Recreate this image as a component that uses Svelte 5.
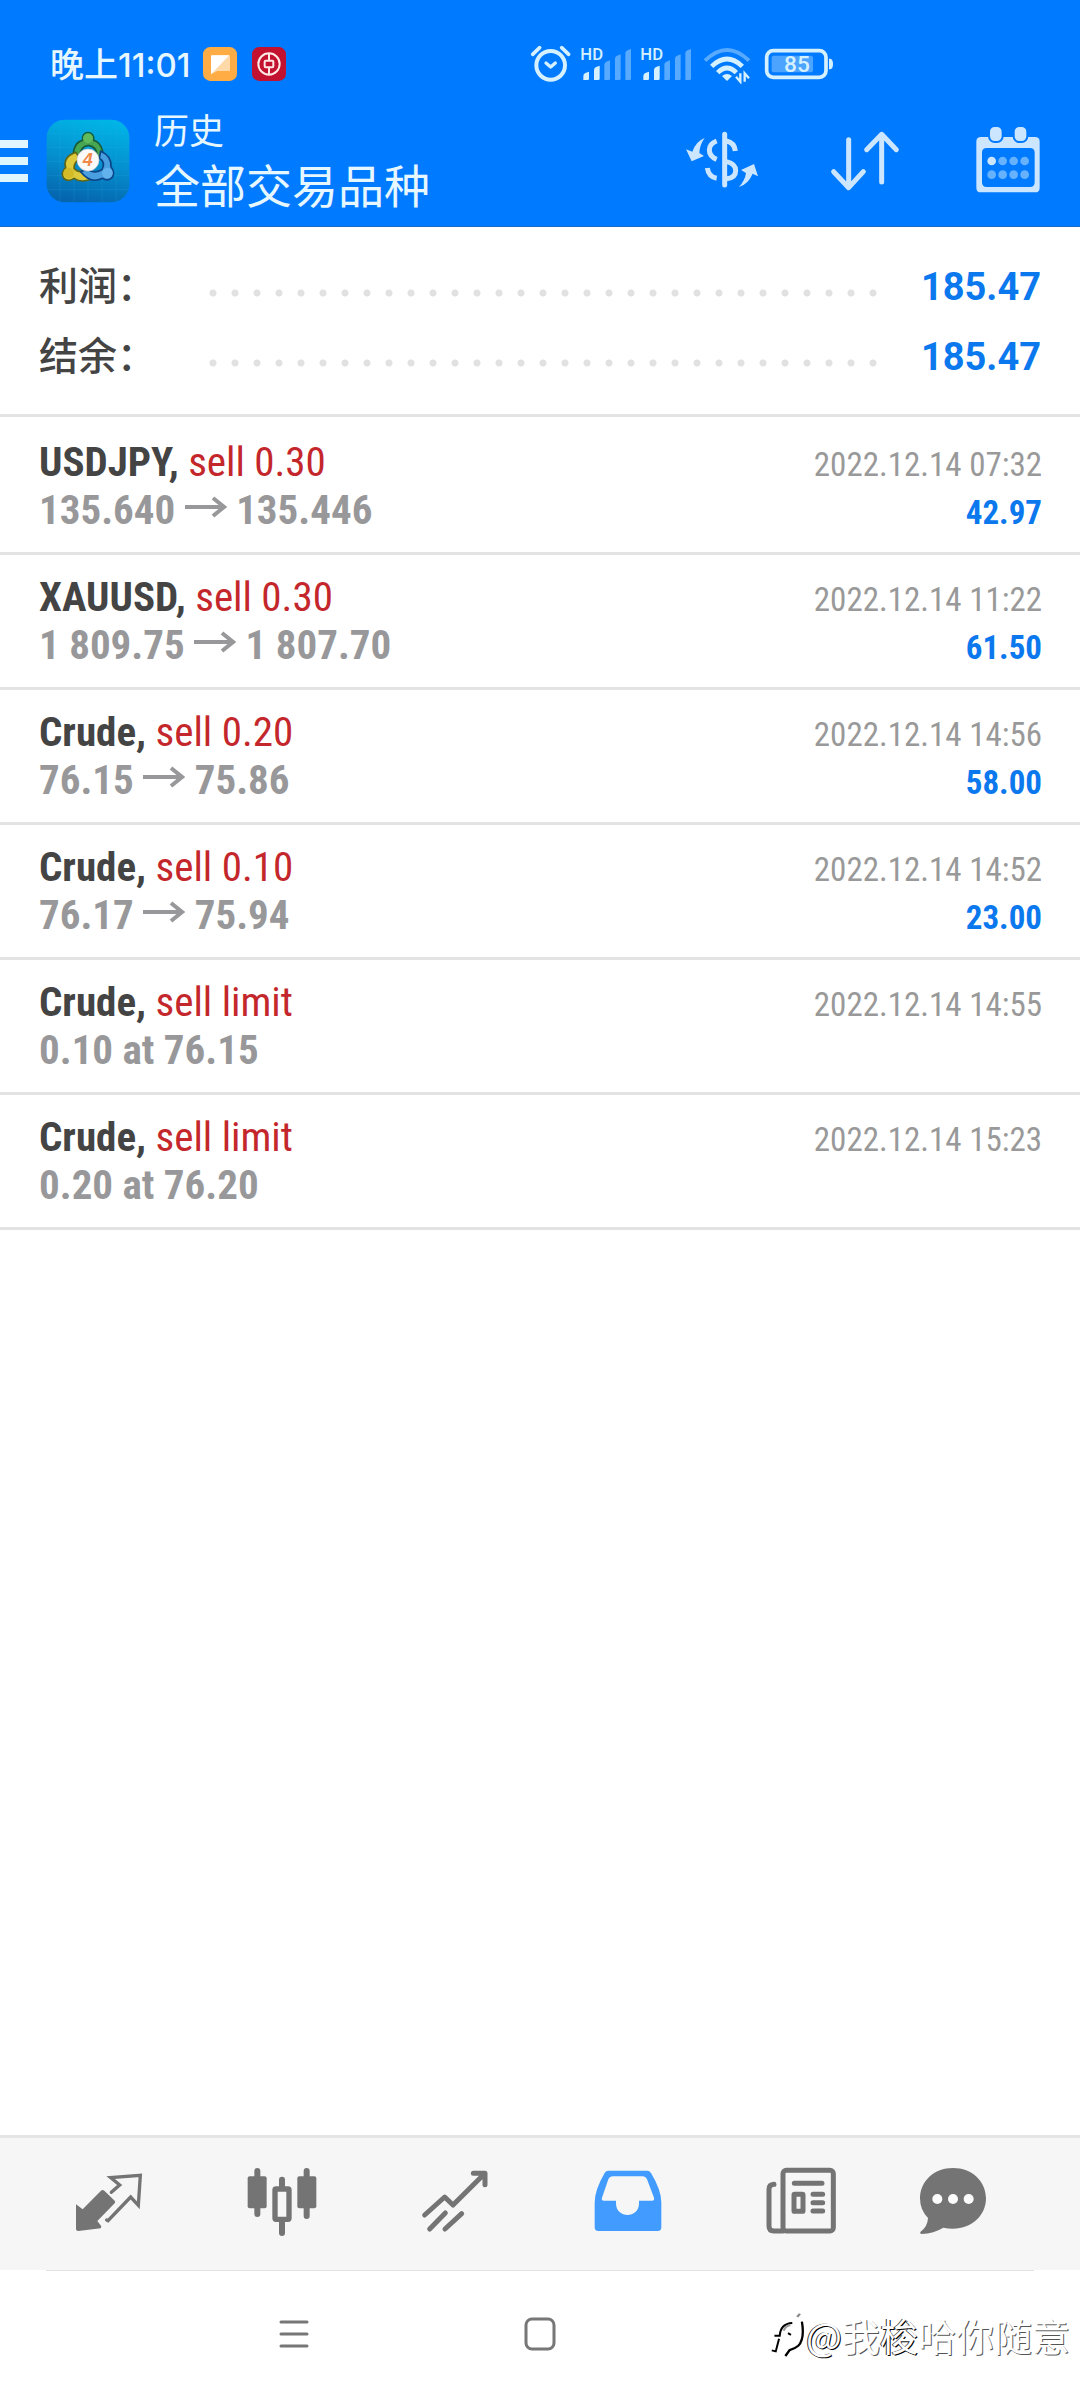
<script>
  const totals = [
    { label: '利润：', value: '185.47' },
    { label: '结余：', value: '185.47' },
  ];

  const deals = [
    { symbol: 'USDJPY,', side: 'sell 0.30', from: '135.640', to: '135.446', time: '2022.12.14 07:32', profit: '42.97' },
    { symbol: 'XAUUSD,', side: 'sell 0.30', from: '1 809.75', to: '1 807.70', time: '2022.12.14 11:22', profit: '61.50' },
    { symbol: 'Crude,', side: 'sell 0.20', from: '76.15', to: '75.86', time: '2022.12.14 14:56', profit: '58.00' },
    { symbol: 'Crude,', side: 'sell 0.10', from: '76.17', to: '75.94', time: '2022.12.14 14:52', profit: '23.00' },
    { symbol: 'Crude,', side: 'sell limit', detail: '0.10 at 76.15', time: '2022.12.14 14:55' },
    { symbol: 'Crude,', side: 'sell limit', detail: '0.20 at 76.20', time: '2022.12.14 15:23' },
  ];

  const bars = [
    { x: 250, top: 126 },
    { x: 282, top: 108 },
    { x: 313, top: 92 },
    { x: 345, top: 74 },
    { x: 376, top: 58 },
  ];
  const dotXs = [996, 1029, 1062, 1095];
</script>

<div class="screen">
  <header class="top">
    <div class="status">
      <span class="clock">晚上<span class="digits">11:01</span></span>
      <svg class="badge" viewBox="609 50 102 102" aria-hidden="true">
        <rect x="609" y="50" width="102" height="102" rx="22" fill="#ffac45" />
        <path d="M636 75H686Q690 75 690 79V118Q690 122 686 122H652L633 132V79Q633 75 636 75Z" fill="#ffd9a8" />
        <path d="M636 75H688L633 132V79Q633 75 636 75Z" fill="#fff" />
      </svg>
      <svg class="badge" viewBox="759 50 102 102" aria-hidden="true">
        <rect x="759" y="50" width="102" height="102" rx="22" fill="#c3122f" />
        <g fill="none" stroke="#ffe9e4" stroke-width="6">
          <circle cx="810" cy="101" r="32" />
          <rect x="797" y="91" width="26" height="20" rx="3" />
          <path d="M810 69V91M810 111V133" />
        </g>
      </svg>
      <svg class="signals" viewBox="90 42 912 120" aria-hidden="true">
        <g fill="none" stroke="#d5f1ff" stroke-width="12" stroke-linecap="round" stroke-linejoin="round">
          <circle cx="152" cy="106" r="43" />
          <path d="M98 73L119 53M206 73L185 53" stroke-width="11" />
          <path d="M138 99L152 111L166 99" stroke-width="10" />
        </g>
        {#each [0, 180] as shift}
          <g transform="translate({shift} 0)">
            <text class="svg-text" x="241" y="91" font-size="50">HD</text>
            {#each bars as bar, i}
              <path
                d="M{bar.x} 150V{bar.top + 12}Q{bar.x} {bar.top + 6} {bar.x + 6} {bar.top + 3}L{bar.x + 17} {bar.top - 1}V146Q{bar.x + 17} 150 {bar.x + 13} 150Z"
                fill={i < 2 ? '#d5f1ff' : '#58aaff'}
              />
            {/each}
          </g>
        {/each}
        <g fill="none" stroke-width="12">
          <path d="M615 92Q681 28 747 92" stroke="#58aaff" />
          <path d="M635 109Q681 65 727 109" stroke="#d5f1ff" stroke-width="14" />
          <path d="M653 128Q681 100 709 128" stroke="#d5f1ff" stroke-width="14" />
        </g>
        <path d="M666 138Q681 126 696 138L681 153Z" fill="#d5f1ff" />
        <path d="M721 130V155L708 140M734 155V130L747 145" fill="none" stroke="#d5f1ff" stroke-width="7" />
        <rect x="800" y="62" width="178" height="80" rx="20" fill="none" stroke="#d5f1ff" stroke-width="11" />
        <rect x="815" y="77" width="124" height="50" rx="6" fill="#4da4ff" />
        <path d="M987 86H991Q999 88 999 102T991 118H987Z" fill="#d5f1ff" />
        <text class="svg-text" x="891" y="127" font-size="68" text-anchor="middle">85</text>
      </svg>
    </div>

    <div class="bar">
      <button class="menu" aria-label="菜单">
        <svg viewBox="0 0 28 42" width="28" height="42"><path d="M0 0H28V8H0ZM0 17H28V25H0ZM0 34H28V42H0Z" fill="#e0f6ff" /></svg>
      </button>
      <svg class="logo" viewBox="138 268 252 252" aria-hidden="true">
        <defs>
          <linearGradient id="tile" x1="0.6" y1="0" x2="0.4" y2="1">
            <stop offset="0" stop-color="#00b4e6" />
            <stop offset="0.5" stop-color="#0590cf" />
            <stop offset="1" stop-color="#0565ad" />
          </linearGradient>
        </defs>
        <rect x="140" y="270" width="248" height="248" rx="54" fill="url(#tile)" />
        <path d="M180 270V518M222 270V518M264 270V518M306 270V518M348 270V518M140 312H388M140 354H388M140 396H388M140 438H388M140 480H388" stroke="#35b5e6" stroke-opacity="0.25" stroke-width="2" />
        <g stroke-linejoin="round">
          <path d="M220 392Q216 340 248 332Q246 310 264 309Q283 310 281 332Q311 342 310 390L291 378Q292 352 265 347Q240 350 239 382Z" fill="#48a551" stroke="#155d3a" stroke-width="5" />
          <path d="M228 368Q188 382 197 414Q180 432 192 446Q204 458 222 446Q246 462 280 446L256 424Q232 430 222 416Q222 396 240 388Z" fill="#ddc93c" stroke="#5f6616" stroke-width="5" />
          <path d="M302 364Q336 380 333 412Q347 428 336 444Q324 456 308 446Q272 464 242 426L262 418Q280 434 306 420Q318 398 298 386Z" fill="#4a9fe0" stroke="#0b4587" stroke-width="5" />
        </g>
        <circle cx="264" cy="326" r="15" fill="#5fbb5c" />
        <circle cx="206" cy="430" r="16" fill="#d3bb28" />
        <circle cx="322" cy="430" r="16" fill="#62b2ee" />
        <circle cx="264" cy="391" r="33" fill="#fafafa" stroke="#c9c9c9" stroke-width="2" />
        <text class="four" x="263" y="410" font-size="54" text-anchor="middle">4</text>
      </svg>
      <div class="titles">
        <h1>历史</h1>
        <p>全部交易品种</p>
      </div>
      <div class="actions">
        <button aria-label="品种">
          <svg viewBox="78 44 216 216">
            <g fill="none" stroke="#cce6ff" stroke-width="15">
              <path d="M194 72V224" stroke-linecap="round" />
              <path d="M170 92Q148 100 148 119T170 147M142 173Q146 200 170 204" />
              <path d="M200 92Q224 98 226 122" />
              <path d="M200 154Q227 160 227 181T200 205" />
            </g>
            <path d="M134 83Q119 103 118 128L132 137L95 153L78 117L97 124Q108 93 134 83ZM237 230Q255 210 258 188L243 179L282 161L294 198L278 190Q264 222 237 230Z" fill="#cce6ff" />
          </svg>
        </button>
        <button aria-label="排序">
          <svg viewBox="507 44 216 216">
            <path d="M566 88V230M521 184L566 232L610 184M665 215V75M620 118L665 72L709 118" fill="none" stroke="#cce6ff" stroke-width="15" stroke-linecap="round" stroke-linejoin="round" />
          </svg>
        </button>
        <button aria-label="日期">
          <svg viewBox="937 44 216 216">
            <path fill-rule="evenodd" d="M964 80H1126Q1140 80 1140 94V232Q1140 246 1126 246H964Q950 246 950 232V94Q950 80 964 80ZM981 113Q967 113 967 127V216Q967 230 981 230H1111Q1125 230 1125 216V127Q1125 113 1111 113Z" fill="#cce6ff" />
            <rect x="988" y="47" width="41" height="48" rx="17" fill="#cce6ff" stroke="#007aff" stroke-width="6" />
            <rect x="1062" y="47" width="41" height="48" rx="17" fill="#cce6ff" stroke="#007aff" stroke-width="6" />
            {#each dotXs as x, i}
              <circle cx={x} cy="152" r="13" fill={i === 0 ? '#cce6ff' : '#66b2ff'} />
              <circle cx={x} cy="193" r="13" fill="#66b2ff" />
            {/each}
          </svg>
        </button>
      </div>
    </div>
  </header>

  <main>
    <dl class="totals">
      {#each totals as t}
        <div class="total">
          <dt>{t.label}</dt>
          <span class="leader"></span>
          <dd>{t.value}</dd>
        </div>
      {/each}
    </dl>

    <ul class="deals">
      {#each deals as d}
        <li>
          <div class="line">
            <span class="name"><b>{d.symbol}</b> <span class="side">{d.side}</span></span>
            <time>{d.time}</time>
          </div>
          <div class="line">
            {#if d.detail}
              <span class="price">{d.detail}</span>
            {:else}
              <span class="price">
                {d.from}
                <svg class="arrow" viewBox="0 0 42 22" role="img" aria-label="至"><path d="M0 11H38M28 2L39 11L28 20" fill="none" stroke="#98989a" stroke-width="4" /></svg>
                {d.to}
              </span>
              <span class="profit">{d.profit}</span>
            {/if}
          </div>
        </li>
      {/each}
    </ul>
  </main>

  <nav class="tabs">
    <button aria-label="行情">
      <svg viewBox="38 48 216 216">
        <path d="M47 163L67 178L122 122Q127 118 132 122L163 152Q166 156 163 160L111 213L123 229L121 235L54 243Q47 243 47 238Z" fill="#747474" />
        <path d="M153 127L178 105L151 83L240 76L234 166L211 141L143 212L139 210" fill="none" stroke="#747474" stroke-width="10" stroke-linecap="round" />
      </svg>
    </button>
    <button aria-label="图表">
      <svg viewBox="555 48 216 216">
        <path d="M589 63V192M737 63V198M663 89V115M663 210V249" stroke="#747474" stroke-width="18" stroke-linecap="round" />
        <rect x="560" y="79" width="57" height="96" rx="6" fill="#747474" />
        <rect x="709" y="79" width="57" height="96" rx="6" fill="#747474" />
        <rect x="642" y="117" width="42" height="91" rx="3" fill="#f6f6f6" stroke="#747474" stroke-width="16" />
      </svg>
    </button>
    <button aria-label="交易">
      <svg viewBox="1075 48 216 216">
        <path d="M1092 195L1152 141L1177 165L1270 73M1238 70H1273V104M1107 237L1154 189M1153 237L1203 191" fill="none" stroke="#747474" stroke-width="15" stroke-linecap="round" stroke-linejoin="round" />
      </svg>
    </button>
    <button aria-label="历史" aria-current="page">
      <svg viewBox="35 48 216 216">
        <path fill-rule="evenodd" d="M84 62H200Q208 62 212 69Q243 120 243 158V232Q243 243 232 243H54Q43 243 43 232V158Q43 120 73 69Q77 62 84 62ZM98 79Q88 79 84 88L65 143Q62 152 71 152H107V160C107 207 176 207 176 160V152H215Q223 152 221 143L200 88Q196 79 188 79Z" fill="#429cff" />
      </svg>
    </button>
    <button aria-label="新闻">
      <svg viewBox="555 48 216 216">
        <g fill="none" stroke="#747474" stroke-width="15" stroke-linecap="round">
          <rect x="609" y="61" width="151" height="182" rx="10" />
          <path d="M609 243H582Q567 243 567 228V118Q567 104 582 103M643 100H726M699 133H728M699 158H728M699 183H728" stroke-linejoin="round" />
          <rect x="642" y="133" width="27" height="51" rx="2" />
        </g>
      </svg>
    </button>
    <button aria-label="消息">
      <svg viewBox="1011 48 216 216">
        <path d="M1119 54C1176 54 1218 94 1218 145S1176 236 1119 236Q1104 236 1090 233Q1062 250 1024 252Q1019 251 1021 246Q1043 230 1044 204Q1020 180 1020 145C1020 94 1062 54 1119 54Z" fill="#747474" />
        <g fill="#fcfcfc">
          <circle cx="1072" cy="147" r="15" />
          <circle cx="1119" cy="147" r="15" />
          <circle cx="1166" cy="147" r="15" />
        </g>
      </svg>
    </button>
  </nav>

  <footer class="system">
    <button aria-label="最近任务">
      <svg viewBox="0 0 36 36"><path d="M5 6H31M5 18H31M5 30H31" fill="none" stroke="#777" stroke-width="3" stroke-linecap="round" /></svg>
    </button>
    <button aria-label="主屏幕">
      <svg viewBox="0 0 36 36"><rect x="4" y="3" width="28" height="30" rx="6" fill="none" stroke="#777" stroke-width="3" /></svg>
    </button>
    <div class="watermark">
      <svg viewBox="50 50 111 145" aria-hidden="true">
        <path d="M132 66L140 57L146 60L138 70Z" fill="#888" />
        <path d="M149 82Q158 135 138 155Q128 164 112 168L99 186" fill="none" stroke="#000" stroke-width="7" />
        <path d="M66 125H82Q84 88 120 86M80 134L70 172L58 169" fill="none" stroke="#000" stroke-width="6" />
        <path d="M94 110Q98 95 114 92" fill="none" stroke="#999" stroke-width="6" />
        <path d="M107 117L116 122" stroke="#000" stroke-width="6" />
      </svg>
      <span><span class="strong">@</span>我<span class="strong">梭</span>哈你随意</span>
    </div>
  </footer>
</div>

<style>
  :global(body) {
    margin: 0;
    background: #fff;
  }
  .screen {
    display: flex;
    flex-direction: column;
    min-height: 100vh;
    font-family: 'Roboto Condensed', Roboto, 'Noto Sans CJK SC', sans-serif;
  }
  button {
    display: flex;
    align-items: center;
    justify-content: center;
    padding: 0;
    border: 0;
    background: none;
  }
  svg {
    display: block;
  }

  .top {
    background: #007aff;
    border-bottom: 1px solid #1a6bc4;
    color: #e6f7ff;
    font-family: 'Noto Sans CJK SC', sans-serif;
  }
  .status {
    display: flex;
    align-items: center;
    gap: 15px;
    height: 64px;
    padding: 32px 0 0 50px;
  }
  .clock {
    display: flex;
    align-items: baseline;
    width: 138px;
    font-size: 34px;
    line-height: 40px;
    font-weight: 500;
    white-space: nowrap;
  }
  .digits {
    font-family: Inter, sans-serif;
    font-size: 33px;
  }
  .badge {
    width: 34px;
    height: 34px;
  }
  .signals {
    width: 304px;
    height: 40px;
    margin-left: 229px;
  }
  .svg-text {
    font-family: Roboto, sans-serif;
    font-weight: 500;
    fill: #d5f1ff;
  }
  .four {
    font-family: 'Liberation Sans', sans-serif;
    font-style: italic;
    font-weight: 700;
    fill: #f08a4b;
  }
  .bar {
    display: flex;
    align-items: center;
    height: 130px;
    padding-right: 36px;
  }
  .menu {
    margin-right: 18px;
  }
  .logo {
    width: 84px;
    height: 84px;
  }
  .titles {
    margin-left: 24px;
    padding-bottom: 6px;
    white-space: nowrap;
  }
  .titles h1 {
    margin: 0;
    font-size: 35px;
    line-height: 50px;
    font-weight: 400;
  }
  .titles p {
    margin: 0;
    font-size: 46px;
    line-height: 58px;
  }
  .actions {
    display: flex;
    gap: 71px;
    margin-left: auto;
  }
  .actions svg,
  .tabs svg {
    width: 72px;
    height: 72px;
  }

  main {
    flex: 1;
  }
  .totals {
    margin: 0;
    padding: 23px 39px 24px;
    border-bottom: 3px solid #e3e3e3;
  }
  .total {
    display: flex;
    align-items: center;
    height: 70px;
  }
  dt {
    padding-bottom: 4px;
    color: #444;
    font-family: 'Noto Sans CJK SC', sans-serif;
    font-size: 39px;
    font-weight: 500;
  }
  .leader {
    flex: 1;
    height: 22px;
    margin: 16px 32px 0 46px;
    background: radial-gradient(circle at center, #e1e1e1 3px, transparent 4px) left center / 22px 22px repeat-x;
  }
  dd {
    margin: 0;
    padding-top: 4px;
    color: #0b78ee;
    font-family: Roboto, sans-serif;
    font-size: 38px;
    font-weight: 700;
  }

  .deals {
    margin: 0;
    padding: 3px 0 0;
    list-style: none;
  }
  .deals li {
    padding: 18px 38px 18px 39px;
    border-bottom: 3px solid #e3e3e3;
  }
  .line {
    display: flex;
    align-items: baseline;
    justify-content: space-between;
    height: 48px;
    font-size: 41px;
    line-height: 48px;
    white-space: nowrap;
  }
  .name {
    color: #444;
  }
  .side {
    color: #c4272b;
  }
  .price {
    color: #98989a;
    font-weight: 700;
  }
  .arrow {
    display: inline-block;
    width: 42px;
    height: 22px;
    vertical-align: 6px;
  }
  time {
    color: #999;
    font-size: 33px;
  }
  .profit {
    color: #0b78ee;
    font-size: 33px;
    font-weight: 700;
  }

  .tabs {
    display: grid;
    grid-template-columns: 173fr 173fr 173fr 173fr 173fr 132fr;
    height: 128px;
    padding: 0 61px 4px 22px;
    border-top: 3px solid #e5e5e5;
    background: #f6f6f6;
  }
  .system {
    position: relative;
    display: flex;
    justify-content: center;
    height: 128px;
    padding: 0 246px 2px 0;
    background: #fff;
  }
  .system::before {
    content: '';
    position: absolute;
    top: 0;
    left: 46px;
    right: 46px;
    height: 1px;
    background: #e2e2e2;
  }
  .system button {
    width: 246px;
  }
  .system button svg {
    width: 36px;
    height: 36px;
  }
  .watermark {
    position: absolute;
    right: 10px;
    bottom: 37px;
    display: flex;
    align-items: center;
    color: #fff;
    font-family: 'Noto Sans CJK SC', sans-serif;
    font-size: 38px;
    line-height: 56px;
    white-space: nowrap;
    text-shadow: 1px 1px 0 #555;
  }
  .watermark svg {
    width: 37px;
    height: 48px;
  }
  .strong {
    text-shadow: 1px 1px 0 #000, -1px 0 0 #333;
  }
</style>
